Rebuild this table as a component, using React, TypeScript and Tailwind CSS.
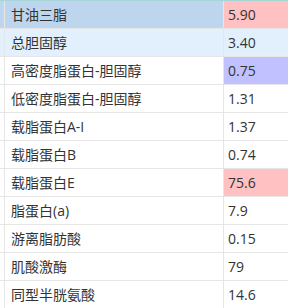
const ROWS: { name: string; value: string; bg?: string; cell?: string }[] = [
  { name: "甘油三脂", value: "5.90", bg: "bg-[#bdd6ee]", cell: "bg-[#ffc1c1]" },
  { name: "总胆固醇", value: "3.40", bg: "bg-[#e1f0fc]" },
  { name: "高密度脂蛋白-胆固醇", value: "0.75", cell: "bg-[#c1c1ff]" },
  { name: "低密度脂蛋白-胆固醇", value: "1.31" },
  { name: "载脂蛋白A-I", value: "1.37" },
  { name: "载脂蛋白B", value: "0.74" },
  { name: "载脂蛋白E", value: "75.6", cell: "bg-[#ffc1c1]" },
  { name: "脂蛋白(a)", value: "7.9" },
  { name: "游离脂肪酸", value: "0.15" },
  { name: "肌酸激酶", value: "79" },
  { name: "同型半胱氨酸", value: "14.6" },
];

export default function App() {
  return (
    <div
      className="w-[288px] h-[308px] overflow-hidden bg-white text-[14px] text-[#333]"
      style={{ fontFamily: '"Open Sans", "Noto Sans CJK SC", sans-serif' }}
    >
      <div className="border-t border-[#a6d6da]">
        {ROWS.map((r, i) => (
          <div key={i} className={`flex h-[28px] border-b border-[#e6e6e6] ${r.bg ?? "bg-white"}`}>
            <div className="w-[5px] border-r border-[#e6e6e6]" />
            <div className="w-[219px] pl-[6px] flex items-center border-r border-[#e6e6e6] whitespace-nowrap">
              {r.name}
            </div>
            <div className={`flex-1 pl-[4px] flex items-center ${r.cell ?? ""}`}>{r.value}</div>
          </div>
        ))}
      </div>
    </div>
  );
}
